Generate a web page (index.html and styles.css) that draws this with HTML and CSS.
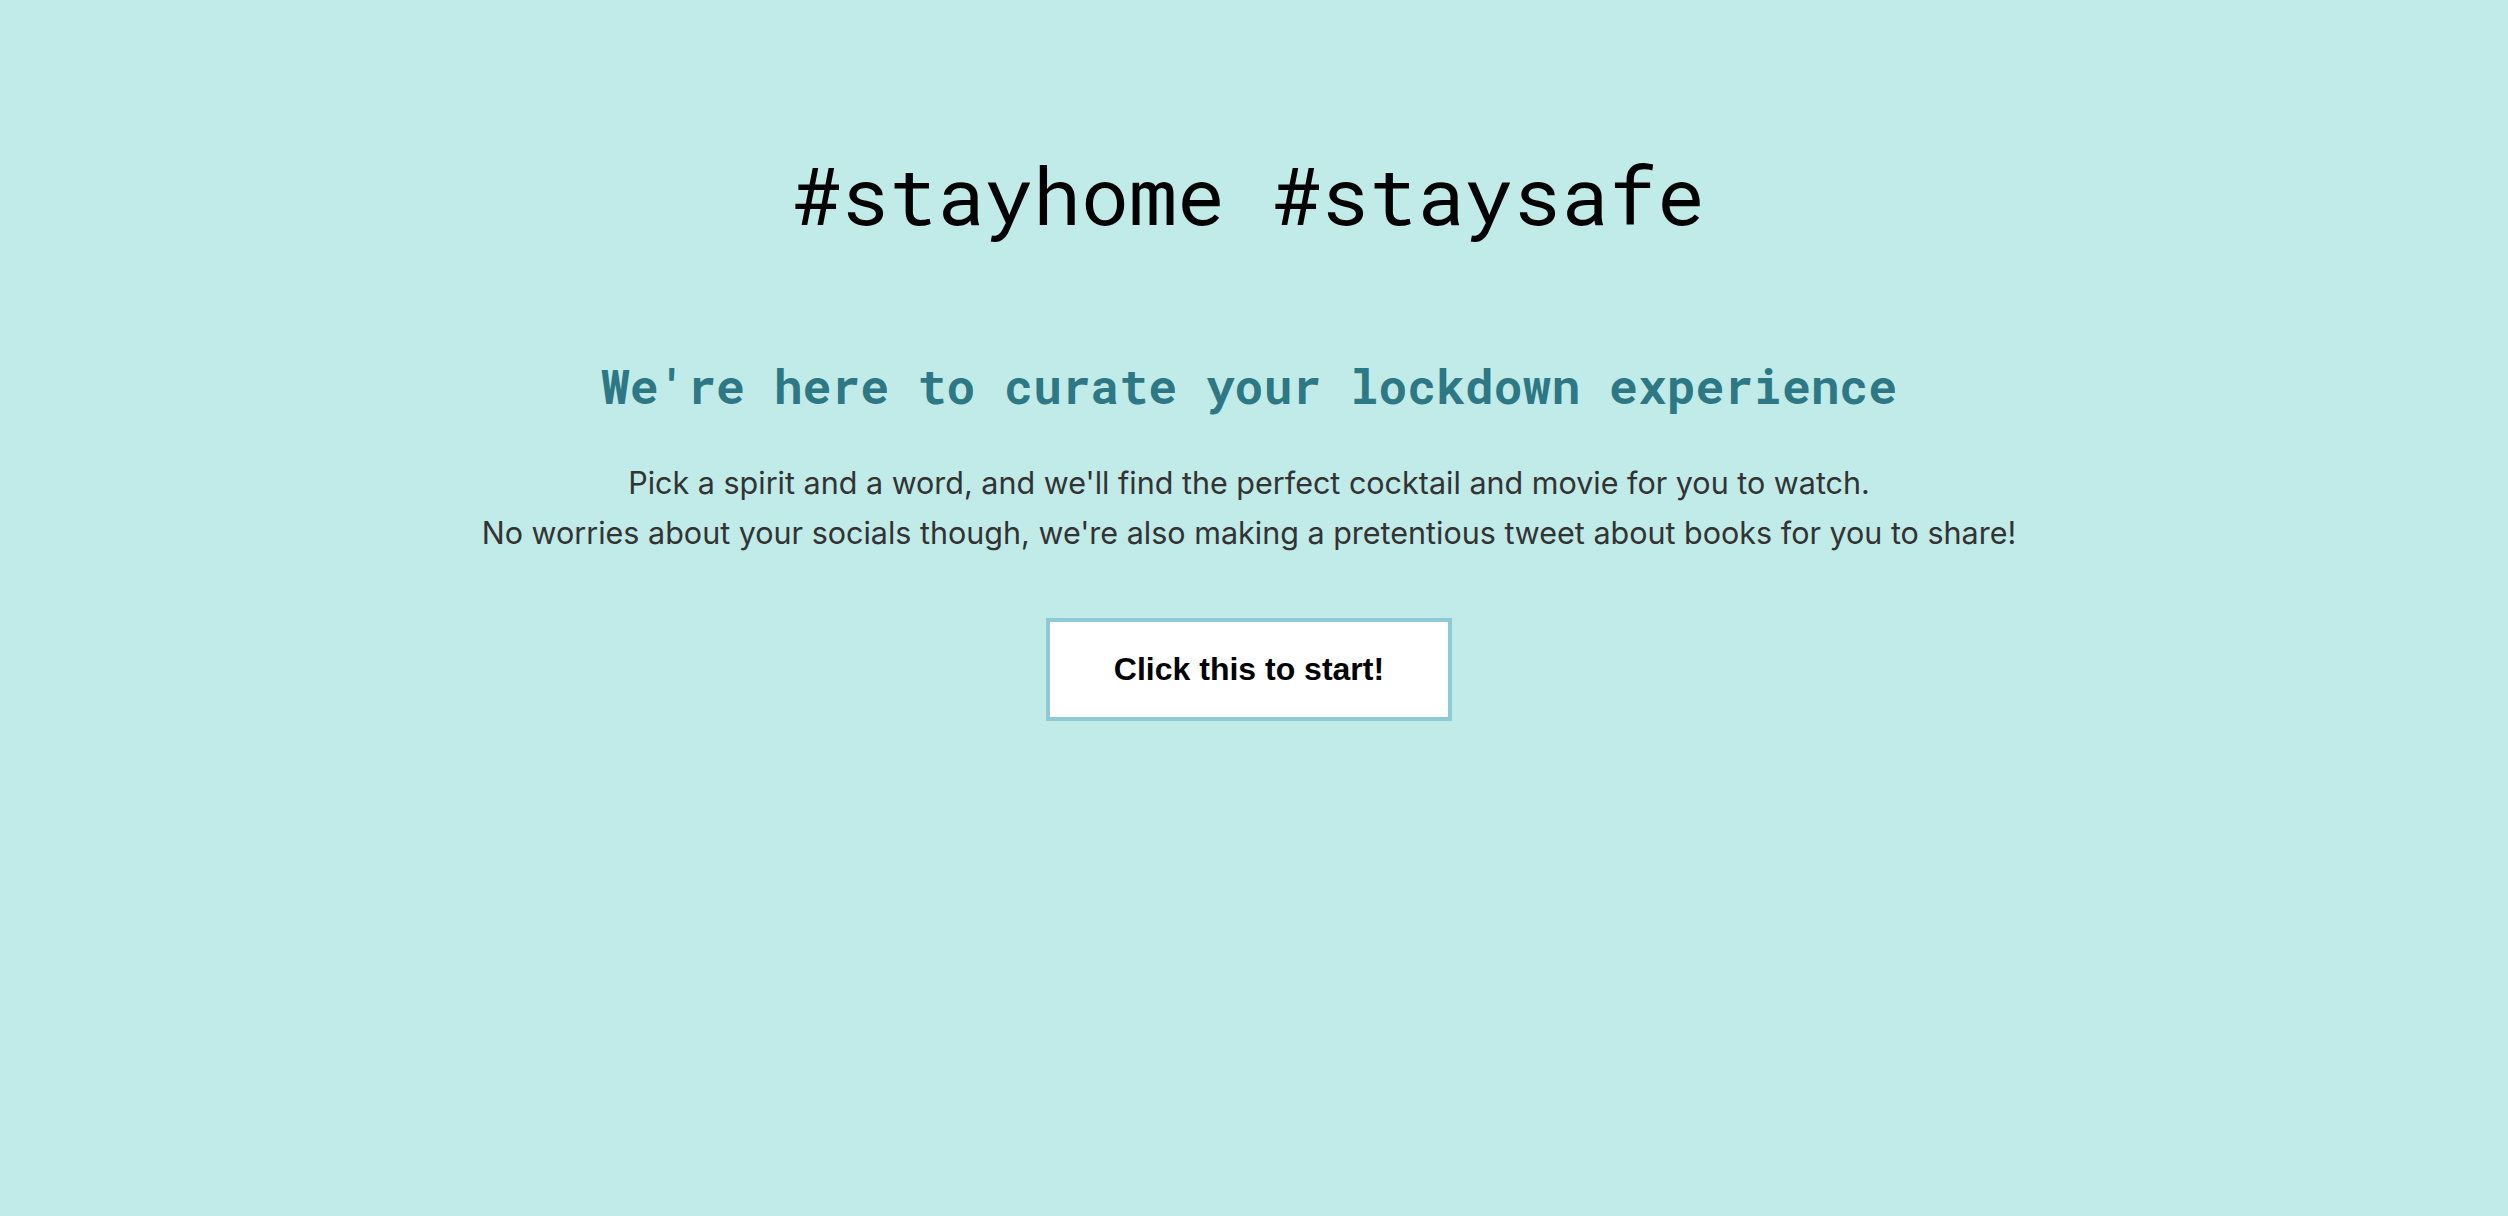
FILE: index.html
```html
<!DOCTYPE html>
<html lang="en">
<head>
<meta charset="utf-8">
<title>#stayhome #staysafe</title>
<link rel="stylesheet" href="styles.css">
</head>
<body>
<main class="page">
  <h1 class="title">#stayhome #staysafe</h1>
  <h2 class="subtitle">We're here to curate your lockdown experience</h2>
  <p class="intro">Pick a spirit and a word, and we'll find the perfect cocktail and movie for you to watch.<br>No worries about your socials though, we're also making a pretentious tweet about books for you to share!</p>
  <button class="start" type="button">Click this to start!</button>
</main>
</body>
</html>
```

FILE: styles.css
```css
html, body {
  margin: 0;
  padding: 0;
  background: #c0ebe8;
  height: 100%;
}
.page {
  display: flex;
  flex-direction: column;
  align-items: center;
  text-align: center;
  padding-top: 154px;
  padding-right: 10px;
}
.title {
  margin: 0;
  font-family: "Roboto Mono", "DejaVu Sans Mono", monospace;
  font-weight: 400;
  font-size: 80px;
  line-height: 80px;
  color: #000;
}
.subtitle {
  margin: 124px 0 0;
  font-family: "Roboto Mono", "DejaVu Sans Mono", monospace;
  font-weight: 700;
  font-size: 48px;
  line-height: 56px;
  color: #2e7784;
}
.intro {
  margin: 44px 0 0;
  font-family: Inter, "Noto Sans", sans-serif;
  font-size: 30.5px;
  line-height: 50px;
  color: #333;
}
.start {
  margin-top: 60px;
  width: 406px;
  height: 103px;
  background: #fff;
  border: 4px solid #8ecad4;
  font-family: "Liberation Sans", Arial, sans-serif;
  font-weight: 700;
  font-size: 32px;
  color: #000;
  padding: 0;
  cursor: pointer;
}
```
